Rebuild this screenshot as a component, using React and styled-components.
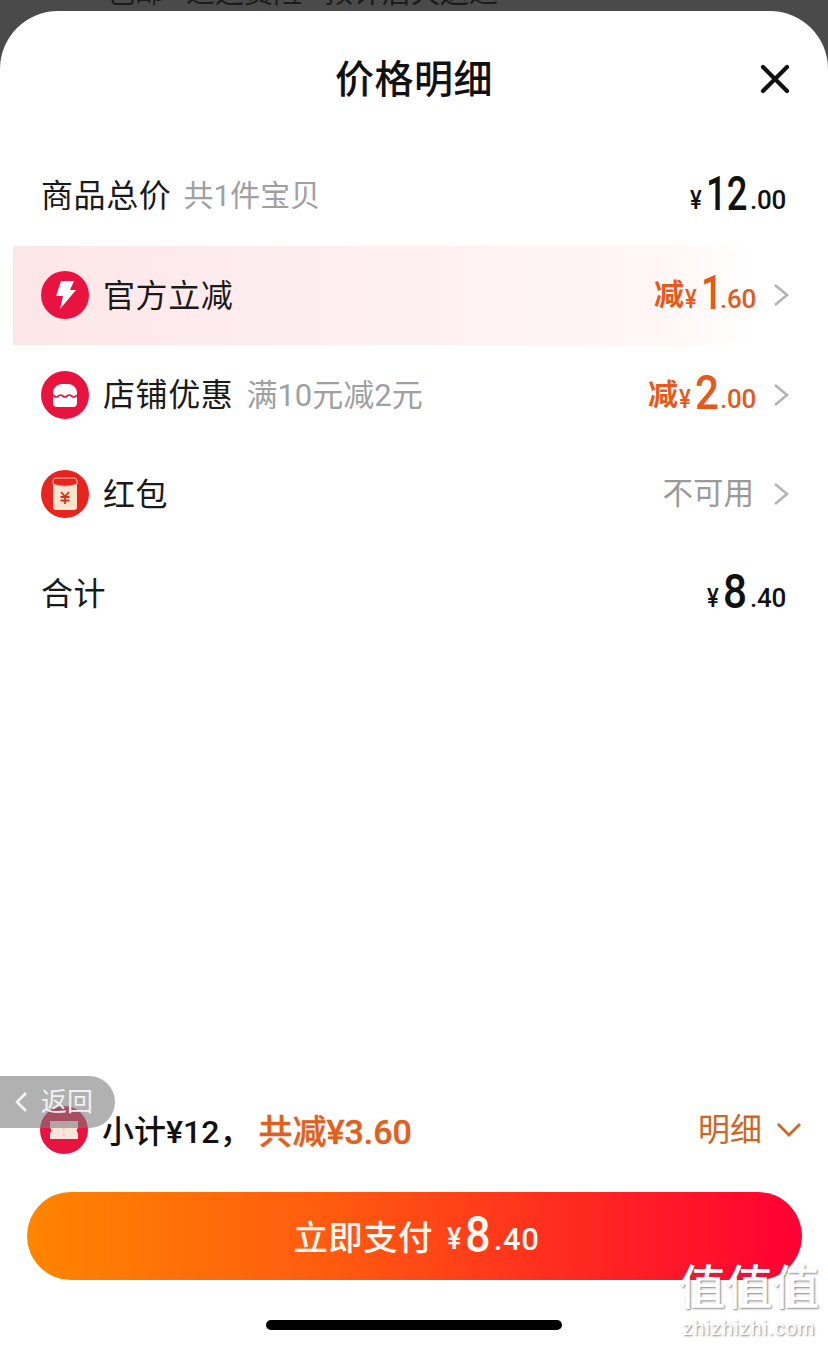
import React from "react";
import styled, { createGlobalStyle } from "styled-components";

const Global = createGlobalStyle`
  html, body { margin: 0; padding: 0; background: #fff; }
  * { box-sizing: border-box; }
`;
const CJK = `Roboto, "Noto Sans CJK SC", sans-serif`;

const Screen = styled.div`
  position: relative; width: 828px; height: 1346px; overflow: hidden;
  background: #4a4a4a; font-family: ${CJK}; display: flex; flex-direction: column;
`;
const Peek = styled.div`
  height: 11px; padding-left: 106px; font-size: 29px; color: #1c1c1c;
  white-space: nowrap; overflow: hidden; display: flex; align-items: flex-end;
  & > span { display: block; line-height: 32px; margin-bottom: 2px; flex: none; }
`;
const Sheet = styled.div`
  flex: 1; background: #fff; border-radius: 58px 58px 0 0; display: flex; flex-direction: column; min-height: 0;
`;
const Header = styled.div`
  height: 135px; display: flex; align-items: center; justify-content: center; position: relative; padding-top: 4px;
`;
const Title = styled.h1`
  margin: 0; font-size: 39px; font-weight: 500; letter-spacing: .5px; color: #111; line-height: 1;
`;
const Close = styled.svg`
  position: absolute; right: 38px; top: 53px; width: 30px; height: 30px;
`;
const List = styled.div`
  display: flex; flex-direction: column; flex: 1; padding: 0 13px;
`;
const Row = styled.div`
  height: 99.5px; display: flex; align-items: center; padding: 0 ${p => p.$tail ? "29px" : "25px"} 0 28px; gap: ${p => p.$gap || 14}px;
  background: ${p => p.$hl ? "linear-gradient(90deg,#fde6e8 0%,#feeef0 40%,#fff6f5 80%,#fff 92%)" : "transparent"};
`;
const Badge = styled.svg`
  width: 48px; height: 48px; flex: none;
`;
const Label = styled.span`
  font-size: 32px; color: #1a1a1a; line-height: 1; white-space: nowrap; letter-spacing: .6px; padding-top: 1px;
`;
const Sub = styled.span`
  font-size: ${p => p.$s || 30}px; color: #a0a0a0; line-height: 1; white-space: nowrap; margin-left: ${p => p.$pull || 0}px; padding-top: 1px;
`;
const Right = styled.div`
  margin-left: auto; display: flex; align-items: center; gap: 16px;
`;
const Price = styled.span`
  display: inline-flex; align-items: flex-end; color: ${p => p.$c || "#111"}; font-weight: 700; line-height: 1; white-space: nowrap;
  margin-top: -4px;
`;
const Prefix = styled.span`font-size: 30px; font-weight: 600; margin: 0 1px 7px 0;`;
const Yen = styled.span`
  display: block; font-size: ${p => p.$s || 26}px; width: ${p => p.$w || 14}px; margin: 0 2px ${p => p.$up ?? 5}px 0;
  font-weight: 500; transform: scaleX(.85); transform-origin: left; text-align: left;
`;
const Big = styled.span`
  display: block; font-size: ${p => p.$s || 48}px; font-weight: 500; width: ${p => p.$w || 24}px;
  transform: scaleX(${p => p.$x || .88}); transform-origin: left; margin-right: ${p => p.$gap ?? 1}px;
`;
const Cents = styled.span`
  display: block; font-size: ${p => p.$s || 26}px; font-weight: 500; letter-spacing: ${p => p.$ls ?? -.3}px; margin-bottom: ${p => p.$up ?? 5}px;
`;
const Chevron = styled.svg`
  width: 18px; height: 28px; flex: none;
`;
const Muted = styled.span`
  font-size: 30.5px; color: #9a9a9a; line-height: 1; margin-right: 2px;
`;
const Summary = styled.div`
  display: flex; align-items: center; padding: 0 26px 0 40px; height: 60px; gap: 14px; margin-bottom: 32px;
`;
const SummaryText = styled.span`
  font-size: 32px; font-weight: 500; color: #111; line-height: 1; white-space: nowrap; padding-top: 4px;
`;
const Saved = styled.span`
  font-size: 34px; font-weight: 500; color: #e0601c; line-height: 1; white-space: nowrap; margin-left: -7px; padding-top: 4px;
  -webkit-text-stroke: .4px #e0601c;
`;
const Detail = styled.div`
  margin-left: auto; display: flex; align-items: center; gap: 14px; color: #d0661f; font-size: 32px; line-height: 1;
`;
const PayButton = styled.button`
  margin: 0 26px 0 27px; height: 88px; border: 0; border-radius: 44px; color: #fff8ee; font-family: inherit;
  background: linear-gradient(90deg,#ff8500 0%,#ff5a10 40%,#ff2a20 70%,#ff0033 100%);
  display: flex; align-items: center; justify-content: center; gap: 14px; padding: 0 0 0 4px;
`;
const PayLabel = styled.span`font-size: 34.5px; font-weight: 500; line-height: 1; letter-spacing: .3px; padding-top: 4px;`;
const PayPrice = styled(Price)`color: #fff8ee; margin-top: -2px;`;
const Indicator = styled.div`
  width: 296px; height: 10px; border-radius: 5px; background: #000; margin: 40px auto 16px; flex: none;
`;
const Back = styled.div`
  position: absolute; left: 0; top: 1076px; width: 115px; height: 52px; border-radius: 0 26px 26px 0;
  background: rgba(120,120,120,.58); color: #f2f2f2; font-size: 26px; display: flex; align-items: center; gap: 13px; padding-left: 14px; line-height: 1;
`;
const Watermark = styled.div`
  position: absolute; right: 7px; top: 1264px; width: 144px; color: #fff; text-align: center; line-height: 1;
  text-shadow: 1px 1px 2px rgba(90,90,90,.75); pointer-events: none;
`;
const WmGlyphs = styled.div`font-size: 47px; font-weight: 500; white-space: nowrap;`;
const WmUrl = styled.div`font-size: 20px; letter-spacing: 1px; margin-top: 7px; font-family: "Liberation Sans", sans-serif; white-space: nowrap;`;

const ChevronRight = () => (
  <Chevron viewBox="0 0 18 28"><path d="M3 4l12 10L3 24" fill="none" stroke="#b4b4b4" strokeWidth="2.6" /></Chevron>
);
const Bolt = () => (
  <Badge viewBox="0 0 48 48"><circle cx="24" cy="24" r="24" fill="#e8133f" />
    <path d="M20 10h13l-4 9h6L19 38l3-13h-7z" fill="#fff" /></Badge>
);
const Shop = () => (
  <Badge viewBox="0 0 48 48"><circle cx="24" cy="24" r="24" fill="#e8133f" />
    <path d="M12 22c0-5 4-9 9-9h6c5 0 9 4 9 9v10a4 4 0 0 1-4 4H16a4 4 0 0 1-4-4z" fill="#fff" />
    <path d="M11 24c2.200 0 2.200 2 4.400 2s2.200-2 4.300-2 2.200 2 4.300 2 2.200-2 4.300-2 2.200 2 4.300 2 2.200-2 4.400-2" fill="none" stroke="#e8133f" strokeWidth="1.700" /></Badge>
);
const Packet = () => (
  <Badge viewBox="0 0 48 48"><circle cx="24" cy="24" r="24" fill="#e9241f" />
    <rect x="12" y="8" width="24" height="32" rx="3" fill="#fbe5cb" />
    <path d="M12 11a3 3 0 0 1 3-3h18a3 3 0 0 1 3 3v3c-8 3-16 3-24 0z" fill="#e9241f" stroke="#f7c4ab" strokeWidth="1" />
    <path d="M20 22l4 4.500 4-4.500M19.500 27h9M19.500 30.500h9M24 26v8" fill="none" stroke="#d5301f" strokeWidth="1.800" /></Badge>
);
const Ticket = () => (
  <Badge viewBox="0 0 48 48"><circle cx="24" cy="24" r="24" fill="#e8133f" />
    <path d="M10 15h28v7a3 3 0 0 0 0 5v6H10v-6a3 3 0 0 0 0-5z" fill="#f8e6dc" />
    <path d="M24 15v18" stroke="#e9c9bb" strokeWidth="1.500" strokeDasharray="3 3" /></Badge>
);

export default function App() {
  return (
    <Screen>
      <Global />
      <Peek><span>包邮 · 退运费险 · 预计后天送达</span></Peek>
      <Sheet>
        <Header>
          <Title>价格明细</Title>
          <Close viewBox="0 0 30 30"><path d="M3 3l24 24M27 3L3 27" stroke="#111" strokeWidth="4.2" strokeLinecap="round" /></Close>
        </Header>
        <List>
          <Row $tail $gap={12}>
            <Label>商品总价</Label><Sub>共1件宝贝</Sub>
            <Right><Price><Yen>¥</Yen><Big $w={42} $x={.76} $gap={2}>12</Big><Cents>.00</Cents></Price></Right>
          </Row>
          <Row $hl>
            <Bolt /><Label>官方立减</Label>
            <Right><Price $c="#e8581a"><Prefix>减</Prefix><Yen>¥</Yen><Big $w={18} $x={.8}>1</Big><Cents>.60</Cents></Price><ChevronRight /></Right>
          </Row>
          <Row>
            <Shop /><Label>店铺优惠</Label><Sub $s={31} $pull={-1}>满10元减2元</Sub>
            <Right><Price $c="#e8581a"><Prefix>减</Prefix><Yen>¥</Yen><Big>2</Big><Cents>.00</Cents></Price><ChevronRight /></Right>
          </Row>
          <Row>
            <Packet /><Label>红包</Label>
            <Right><Muted>不可用</Muted><ChevronRight /></Right>
          </Row>
          <Row $tail>
            <Label>合计</Label>
            <Right><Price><Yen>¥</Yen><Big $gap={3}>8</Big><Cents>.40</Cents></Price></Right>
          </Row>
        </List>
        <Summary>
          <Ticket />
          <SummaryText>小计¥12，</SummaryText>
          <Saved>共减¥3.60</Saved>
          <Detail>明细
            <svg width="26" height="16" viewBox="0 0 26 16"><path d="M2 2l11 11L24 2" fill="none" stroke="#d0661f" strokeWidth="2.800" /></svg>
          </Detail>
        </Summary>
        <PayButton>
          <PayLabel>立即支付</PayLabel>
          <PayPrice><Yen $s={32} $w={16} $up={6}>¥</Yen><Big $s={50} $w={26} $x={.9} $gap={3}>8</Big><Cents $s={31} $ls={.6} $up={5}>.40</Cents></PayPrice>
        </PayButton>
        <Indicator />
      </Sheet>
      <Back>
        <svg width="14" height="24" viewBox="0 0 14 24"><path d="M12 3L3 12l9 9" fill="none" stroke="#f4f4f4" strokeWidth="2.600" /></svg>
        <span>返回</span>
      </Back>
      <Watermark>
        <WmGlyphs>值值值</WmGlyphs>
        <WmUrl>zhizhizhi.com</WmUrl>
      </Watermark>
    </Screen>
  );
}
